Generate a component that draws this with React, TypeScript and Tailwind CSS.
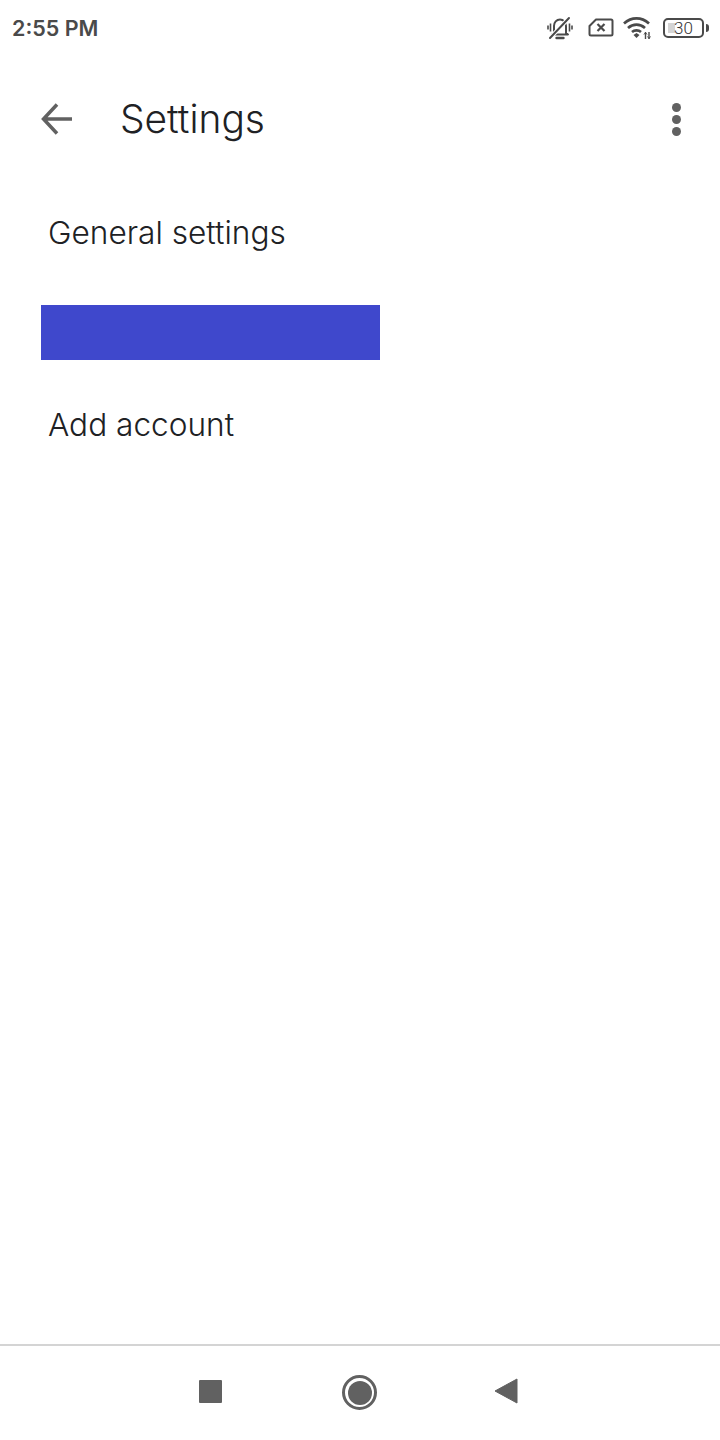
function StatusIcons() {
  return (
    <div className="flex items-center">
      <svg width="26" height="24" viewBox="0 0 26 24" fill="none" stroke="#4a4a4a" strokeWidth="2">
        <path d="M7 17V10c0-3.500 2.500-6.500 6-6.500s6 3 6 6.500v7l2 1.500H5z" strokeLinejoin="round" />
        <path d="M9.500 22h7" strokeWidth="2.400" strokeLinecap="round" />
        <path d="M3.500 7.500v8M1 9.500v4M22.500 7.500v8M25 9.500v4" strokeWidth="1.600" />
        <path d="M3.500 21.500 21.500 2.500" stroke="#ffffff" strokeWidth="4" />
        <path d="M3 22 22 2" strokeWidth="2" strokeLinecap="round" />
      </svg>
      <svg width="26" height="20" viewBox="0 0 26 20" fill="none" stroke="#4a4a4a" strokeWidth="2" className="ml-[15px]">
        <path d="M8 1.500h15a1.500 1.500 0 0 1 1.500 1.500v13a1.500 1.500 0 0 1-1.500 1.500H3A1.500 1.500 0 0 1 1.500 16V8z" strokeLinejoin="round" />
        <path d="m9.500 6 7 7M16.500 6l-7 7" strokeWidth="2.200" />
      </svg>
      <svg width="30" height="24" viewBox="0 0 30 24" fill="none" className="ml-[9px]">
        <path d="M1 7.500c7.500-6.800 17.500-6.800 25 0M5 12c5-4.400 12-4.400 17 0M9 16c2.500-2.200 6.500-2.200 9 0" stroke="#4a4a4a" strokeWidth="2.700" />
        <path d="m10.500 19 3-2 3 2-3 3z" fill="#4a4a4a" />
        <path d="M22.500 16v7M26 16v7" stroke="#4a4a4a" strokeWidth="1.400" />
        <path d="m21 18.500 1.500-2 1.500 2M24.500 20.500l1.500 2 1.500-2" stroke="#4a4a4a" strokeWidth="1" />
      </svg>
      <div className="ml-[10px] flex items-center">
        <div className="relative flex h-[20px] w-[41px] items-center justify-center rounded-[5px] border-2 border-[#4a4a4a] font-['Roboto',sans-serif] text-[17px] font-light leading-none text-[#333333]">
          <div className="absolute left-[3px] top-[3px] h-[10px] w-[7px] bg-[#d4d4d4]" />
          <span className="relative">30</span>
        </div>
        <div className="ml-[2px] h-[8px] w-[3px] rounded-r-sm bg-[#4a4a4a]" />
      </div>
    </div>
  );
}

function NavBar() {
  return (
    <div className="flex h-[96px] items-start border-t-2 border-[#d4d4d4] pl-[199px] pt-[34px]">
      <div className="h-[23px] w-[23px] rounded-[1px] bg-[#616161]" />
      <div className="ml-[120px] mt-[-5px] flex h-[35px] w-[35px] items-center justify-center rounded-full border-[3px] border-[#616161]">
        <div className="h-[24px] w-[24px] rounded-full bg-[#616161]" />
      </div>
      <svg width="24" height="28" viewBox="0 0 24 28" className="ml-[117px] mt-[-3px]">
        <path d="M23 2v24L1 14z" fill="#616161" stroke="#616161" strokeWidth="1" strokeLinejoin="round" />
      </svg>
    </div>
  );
}

export default function App() {
  return (
    <div className="flex h-[1440px] w-[720px] flex-col bg-white font-['Inter',sans-serif]">
      <div className="flex h-[56px] items-center justify-between pl-[12px] pr-[11px]">
        <span className="text-[21.500px] font-semibold text-[#4a4a4a]">2:55 PM</span>
        <StatusIcons />
      </div>

      <div className="flex h-[126px] items-center pl-[38px] pr-[39px]">
        <svg width="36" height="36" viewBox="0 0 36 36" fill="none" stroke="#616161" strokeWidth="3.500">
          <path d="M34 18H6M19 3.500 5.500 18 19 32.500" />
        </svg>
        <h1 className="ml-[46px] text-[38.900px] font-[350] leading-none text-[#202124]">Settings</h1>
        <div className="ml-auto flex flex-col gap-[3px]">
          <div className="h-[9px] w-[9px] rounded-full bg-[#616161]" />
          <div className="h-[9px] w-[9px] rounded-full bg-[#616161]" />
          <div className="h-[9px] w-[9px] rounded-full bg-[#616161]" />
        </div>
      </div>

      <div className="flex flex-1 flex-col">
        <div className="flex h-[96px] items-center pt-[6px] pl-[48px] text-[31.600px] font-[350] text-[#202124]">General settings</div>
        <div className="ml-[41px] mt-[27px] h-[55px] w-[339px] bg-[#3f48cc]" />
        <div className="flex h-[96px] items-center pt-[34px] pl-[48px] text-[31.600px] font-[350] text-[#202124]">Add account</div>
      </div>

      <NavBar />
    </div>
  );
}
